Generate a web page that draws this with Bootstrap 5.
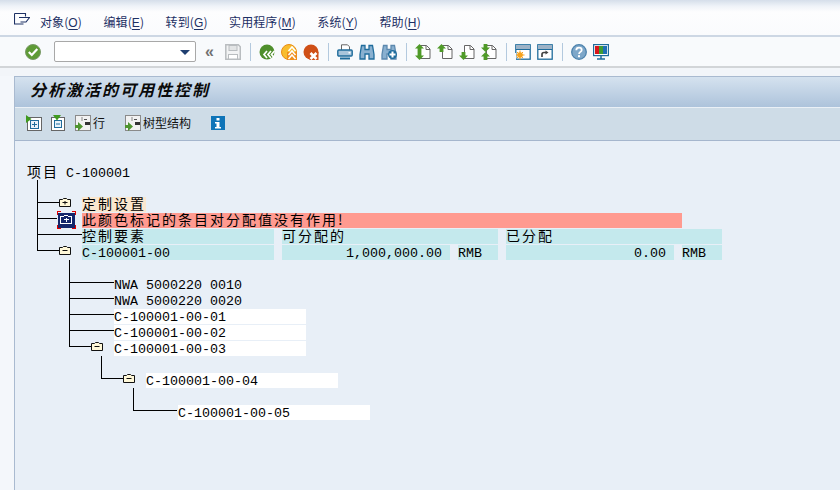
<!doctype html>
<html lang="zh">
<head>
<meta charset="utf-8">
<title>分析激活的可用性控制</title>
<link href="https://cdn.jsdelivr.net/npm/bootstrap@5.3.0/dist/css/bootstrap.min.css" rel="stylesheet">
<style>
html,body{height:100%;}
body{width:840px;height:490px;overflow:hidden;background:#f4f7fb;font-family:"Noto Sans CJK SC","Liberation Sans",sans-serif;color:#000;}
.menu-bar{height:37px;background:linear-gradient(#d5deea 0,#eef2f8 6px,#fdfdfe 12px,#fafbfd 100%);border-bottom:2px solid #cdd7e4;padding-left:14px;padding-top:12px;}
.menu-ico{width:16px;height:12px;margin-right:10px;margin-top:1px;flex:none;}
.menu-link{font-size:12px;line-height:20px;color:#1d3064;text-decoration:none;margin-right:21.5px;letter-spacing:.1px;}
.menu-link u{font-family:"Liberation Sans",sans-serif;text-underline-offset:2px;}
.sys-bar{height:31px;background:#f8fafc;border-bottom:2px solid #d2d5d8;padding-left:25px;}
.sys-ico{width:16px;height:16px;margin-right:6px;flex:none;display:block;}
.sys-sep{width:1px;height:18px;background:#b3c9de;margin-left:3px;margin-right:8px;flex:none;}
.cmd-box{width:142px;height:21px;margin-left:7px;background:#fff;border:1px solid #a8a8a8;border-radius:2px;position:relative;flex:none;}
.cmd-box::after{content:"";position:absolute;right:5px;top:8px;border-left:5px solid transparent;border-right:5px solid transparent;border-top:5px solid #1f3f70;}
.dbl-arrow{width:10px;margin:0 10px 0 9px;flex:none;font:bold 16px/18px "Liberation Sans",sans-serif;color:#707070;}
.gap-strip{height:8px;background:#f2f5f9;}
.work-area{height:414px;margin-left:14px;background:#e8eff7;border-left:1px solid #a9bad0;border-top:1px solid #a9bad0;position:relative;}
.ttl-bar{height:30px;background:linear-gradient(#d5e2ef,#adc3db);padding-left:15px;}
.ttl-txt{font-size:16px;line-height:25px;font-weight:700;font-style:italic;letter-spacing:2px;color:#0a0a0a;}
.app-bar{height:34px;background:#cedce7;border-top:1px solid #eaf0f6;border-bottom:1px solid #a5b6cd;padding-left:11px;padding-bottom:3px;}
.app-ico{width:16px;height:16px;flex:none;display:block;}
.app-txt{font-size:12px;line-height:16px;color:#111;}
.s1{margin-left:8px}.s2{margin-left:9px}.s3{margin-left:20px}.s4{margin-left:2px}.s5{margin-left:19px}
.lst{padding-top:24px;position:relative;font-family:"Liberation Mono","Noto Sans CJK SC",monospace;font-size:13.33px;color:#000;}
.rw{height:16px;display:flex;position:relative;z-index:1;}
.cl{height:15px;line-height:17px;white-space:pre;flex:none;}
.cj{font-family:"Noto Sans CJK SC",sans-serif;font-size:14px;letter-spacing:2px;line-height:13px;}
.hd{line-height:13px;}
.hd .cj{margin-right:-1px;}
.at12{margin-left:12px}.at67{margin-left:67px}.at99{margin-left:99px}.at131{margin-left:131px}.at163{margin-left:163px}.at8{margin-left:8px}
.w64{width:64px}.w192{width:192px}.w216{width:216px}.w168{width:168px}.w40{width:40px}.w600{width:600px}
.bg-set{background:#fae7cf}.bg-red{background:#ff9a90}.bg-cy{background:#c4e9ed}.bg-wh{background:#fff}
.num{text-align:right;padding-right:8px}
.tree-art{position:absolute;left:0;top:0;pointer-events:none;}
</style>
</head>
<body>
<svg width="0" height="0" class="position-absolute">
<defs>
<symbol id="pg" viewBox="0 0 16 16"><path d="M5.500 1.500h6l3.500 3.500v9.500H5.500z" fill="#fff" stroke="#666"/><path d="M11 1.500V5.500h4" fill="none" stroke="#666"/></symbol>
<symbol id="up" viewBox="0 0 8 7"><path d="M4 0l4 4H5.700v3H2.300V4H0z" fill="#4f9a28"/></symbol>
<symbol id="dn" viewBox="0 0 8 7"><path d="M4 7L0 3h2.300V0h3.400v3H8z" fill="#4f9a28"/></symbol>
<symbol id="fp" viewBox="0 0 12 9"><path d="M.5 1.500h3l1-1h3l1 1h3v7H.5z" fill="#fff8d8" stroke="#111"/><path d="M3.500 4.500h5M6 3v3.500" stroke="#111"/></symbol>
<symbol id="fm" viewBox="0 0 12 9"><path d="M.5 1.500h3l1-1h3l1 1h3v7H.5z" fill="#fff8d8" stroke="#111"/><path d="M3.500 4.500h5" stroke="#111"/></symbol>
<symbol id="tr" viewBox="0 0 16 16"><rect x=".5" y=".5" width="15" height="15" fill="#f2f2f2" stroke="#8a8a8a"/><path d="M9 4.500h3M11 8.500h4" stroke="#555"/><path d="M7 2v4" stroke="#888"/><rect x="10" y="7" width="5" height="3" fill="#333"/><path d="M0 10h3V7l5 4.500-5 4.500v-3H0z" fill="#4f9530"/></symbol>
</defs>
</svg>

<nav class="menu-bar d-flex align-items-start">
  <svg class="menu-ico" viewBox="0 0 16 12"><path d="M.5.500h11v3M.5.500v10.500h9M5 4.500h10.500l-3.500 4.500H6.500" fill="none" stroke="#1d3064" stroke-width="1.100"/></svg>
  <a class="menu-link" href="#">对象(<u>O</u>)</a>
  <a class="menu-link" href="#">编辑(<u>E</u>)</a>
  <a class="menu-link" href="#">转到(<u>G</u>)</a>
  <a class="menu-link" href="#">实用程序(<u>M</u>)</a>
  <a class="menu-link" href="#">系统(<u>Y</u>)</a>
  <a class="menu-link" href="#">帮助(<u>H</u>)</a>
</nav>

<div class="sys-bar d-flex align-items-center">
  <svg class="sys-ico" viewBox="0 0 16 16"><circle cx="8" cy="8" r="7.500" fill="#5e9b35" stroke="#7a9a68"/><path d="M3.800 8l3 3 5.500-6" fill="none" stroke="#fff" stroke-width="2.200"/></svg>
  <div class="cmd-box"></div>
  <span class="dbl-arrow">«</span>
  <svg class="sys-ico" viewBox="0 0 16 16"><path d="M.8.800h12.500l2 2v12.400H.8z" fill="#f2f3f4" stroke="#b9bdc0" stroke-width="1.500"/><rect x="4" y="1.500" width="8" height="5" fill="#e3e5e6" stroke="#b9bdc0"/><rect x="3.500" y="10.500" width="9" height="4.500" fill="#fff" stroke="#b9bdc0"/></svg>
  <span class="sys-sep"></span>
  <svg class="sys-ico" viewBox="0 0 16 16"><circle cx="8" cy="8" r="7.500" fill="#4f8f2c"/><path d="M8 7l-3 3.500 3 3.500M12 7l-3 3.500 3 3.500M15.500 7l-3 3.500 3 3.500" fill="none" stroke="#fff" stroke-width="1.700"/></svg>
  <svg class="sys-ico" viewBox="0 0 16 16"><circle cx="8" cy="8" r="7.500" fill="#f8bd2e" stroke="#e98c14"/><path d="M6 8h10v8H6z" fill="#ef8e1d"/><path d="M7.500 7l3.500-4 3.500 4M7.500 11l3.500-4 3.500 4M7.500 15l3.500-4 3.500 4" fill="none" stroke="#fff" stroke-width="1.500"/></svg>
  <svg class="sys-ico" viewBox="0 0 16 16"><circle cx="8" cy="8" r="7.500" fill="#cf4f16"/><rect x="6.500" y="8" width="9" height="8" fill="#cf4f16"/><path d="M7.500 9l6 6M13.500 9l-6 6" stroke="#fff" stroke-width="2.600"/></svg>
  <span class="sys-sep"></span>
  <svg class="sys-ico" viewBox="0 0 16 16"><path d="M4.500 6V.8h6l2 2V6" fill="#fff" stroke="#666"/><rect x=".8" y="6" width="14.400" height="6" rx="1" fill="#a9c5db" stroke="#1f6c9c" stroke-width="1.400"/><path d="M3 14.500h10" stroke="#1f6c9c" stroke-width="2"/><rect x="11.500" y="8" width="2" height="1.500" fill="#fff"/></svg>
  <svg class="sys-ico" viewBox="0 0 16 16"><path d="M2.500 1.500h3.500v4h4v-4h3.500l1.500 9v4.500h-5v-5h-4v5h-5v-4.500z" fill="#89b0d0" stroke="#1f6c9c" stroke-width="1.300"/></svg>
  <svg class="sys-ico" viewBox="0 0 16 16"><path d="M2.500 1.500h3.500v4h4v-4h3.500l1.500 9v4.500h-5v-5h-4v5h-5v-4.500z" fill="#89b0d0" stroke="#5b88ae" stroke-width="1.300"/><circle cx="11.500" cy="10.500" r="4.500" fill="#1f6c9c"/><path d="M11.500 7.500v6M8.500 10.500h6" stroke="#fff" stroke-width="2"/></svg>
  <span class="sys-sep"></span>
  <svg class="sys-ico" viewBox="0 0 16 16"><use href="#pg"/><use href="#up" x="0" y="0" width="9" height="8"/><use href="#dn" x="0" y="8" width="9" height="8"/></svg>
  <svg class="sys-ico" viewBox="0 0 16 16"><use href="#pg"/><use href="#up" x="0" y="0" width="9" height="8"/></svg>
  <svg class="sys-ico" viewBox="0 0 16 16"><use href="#pg"/><use href="#dn" x="0" y="8" width="9" height="8"/></svg>
  <svg class="sys-ico" viewBox="0 0 16 16"><use href="#pg"/><use href="#dn" x="0" y="0" width="9" height="8"/><use href="#up" x="0" y="8" width="9" height="8"/></svg>
  <span class="sys-sep"></span>
  <svg class="sys-ico" viewBox="0 0 16 16"><rect x=".8" y=".8" width="14.400" height="14.400" fill="#fff" stroke="#1f6c9c" stroke-width="1.300"/><rect x="1" y="1" width="14" height="4" fill="#9db2c6"/><path d="M1 5.500h14" stroke="#1f6c9c"/><path d="M5 6.500v9M.5 11h9M2 8l6 6M8 8l-6 6" stroke="#f7a21c"/><circle cx="5" cy="11" r="2.800" fill="#f7a21c"/><rect x="0" y="9" width="1" height="7" fill="#f8fafc"/></svg>
  <svg class="sys-ico" viewBox="0 0 16 16"><rect x=".8" y=".8" width="14.400" height="14.400" fill="#fff" stroke="#1f6c9c" stroke-width="1.300"/><rect x="1" y="1" width="14" height="4" fill="#9db2c6"/><path d="M1 5.500h14" stroke="#1f6c9c"/><path d="M5 13V10.500q0-2 2-2h2" fill="none" stroke="#444" stroke-width="1.700"/><path d="M8.500 6.500l3 2-3 2z" fill="#444"/></svg>
  <span class="sys-sep"></span>
  <svg class="sys-ico" viewBox="0 0 16 16"><circle cx="8" cy="8" r="7.300" fill="#7ea7c9" stroke="#4c82ad" stroke-width="1.300"/><path d="M5.300 6.200q0-2.500 2.700-2.500t2.700 2.300q0 1.200-1.400 2-1.200.7-1.200 2" fill="none" stroke="#fff" stroke-width="1.800"/><rect x="7" y="11.200" width="2" height="2" fill="#fff"/></svg>
  <svg class="sys-ico" viewBox="0 0 16 16"><rect x=".6" y=".6" width="14.800" height="11" fill="#fff" stroke="#1f6c9c" stroke-width="1.200"/><rect x="2" y="2" width="4" height="8" fill="#d8161b"/><rect x="6" y="2" width="4" height="8" fill="#3f9c35"/><rect x="10" y="2" width="4" height="8" fill="#1f6fb5"/><path d="M8 12v2.500M4 15h8" stroke="#1f6c9c" stroke-width="1.500"/></svg>
</div>

<div class="gap-strip"></div>

<main class="work-area">
  <div class="ttl-bar"><div class="ttl-txt">分析激活的可用性控制</div></div>
  <div class="app-bar d-flex align-items-center">
    <svg class="app-ico" viewBox="0 0 16 16"><rect x="1.500" y="2.500" width="14" height="13" fill="#fff" stroke="#666"/><rect x="4.500" y="5.500" width="8" height="8" fill="#e8f2fa" stroke="#1f6c9c"/><path d="M8.500 7v5M6 9.500h5" stroke="#1f6c9c"/><path d="M0 0l5.500 4L0 8z" fill="#3f9a1e"/></svg>
    <svg class="app-ico s1" viewBox="0 0 16 16"><rect x="1.500" y="2.500" width="13" height="13" fill="#fff" stroke="#666"/><rect x="4.500" y="5.500" width="7" height="7" fill="#e8f2fa" stroke="#1f6c9c"/><path d="M6 9h4" stroke="#1f6c9c"/><path d="M3 0h8L7 5.500z" fill="#3f9a1e"/></svg>
    <svg class="app-ico s2"><use href="#tr" width="16" height="16"/></svg>
    <span class="app-txt s4">行</span>
    <svg class="app-ico s3"><use href="#tr" width="16" height="16"/></svg>
    <span class="app-txt s4">树型结构</span>
    <svg class="app-ico s5" viewBox="0 0 16 16"><rect x="1" y="1" width="14" height="14" fill="#0e74b8"/><rect x="6.500" y="3" width="3" height="2.500" fill="#fff"/><path d="M5 7h4.500v5H11v1.500H5V12h1.500V8.500H5z" fill="#fff"/></svg>
  </div>

  <section class="lst">
    <div class="rw"><span class="cl hd at12"><span class="cj">项目</span> C-100001</span></div>
    <div class="rw"></div>
    <div class="rw"><span class="cl cj at67 w64 bg-set">定制设置</span></div>
    <div class="rw"><span class="cl cj at67 w600 bg-red">此颜色标记的条目对分配值没有作用!</span></div>
    <div class="rw"><span class="cl cj at67 w192 bg-cy">控制要素</span><span class="cl cj at8 w216 bg-cy">可分配的</span><span class="cl cj at8 w216 bg-cy">已分配</span></div>
    <div class="rw"><span class="cl at67 w192 bg-cy">C-100001-00</span><span class="cl at8 w168 bg-cy num">1,000,000.00</span><span class="cl at8 w40 bg-cy">RMB</span><span class="cl at8 w168 bg-cy num">0.00</span><span class="cl at8 w40 bg-cy">RMB</span></div>
    <div class="rw"></div>
    <div class="rw"><span class="cl at99 w192">NWA 5000220 0010</span></div>
    <div class="rw"><span class="cl at99 w192">NWA 5000220 0020</span></div>
    <div class="rw"><span class="cl at99 w192 bg-wh">C-100001-00-01</span></div>
    <div class="rw"><span class="cl at99 w192 bg-wh">C-100001-00-02</span></div>
    <div class="rw"><span class="cl at99 w192 bg-wh">C-100001-00-03</span></div>
    <div class="rw"></div>
    <div class="rw"><span class="cl at131 w192 bg-wh">C-100001-00-04</span></div>
    <div class="rw"></div>
    <div class="rw"><span class="cl at163 w192 bg-wh">C-100001-00-05</span></div>
    <svg class="tree-art" width="170" height="300" viewBox="15 141 170 300" aria-hidden="true">
      <g stroke="#000" fill="none" shape-rendering="crispEdges">
        <path d="M37.500 180V250.500H59M37.500 202.500H59M37.500 218.500H57M37.500 234.500H82"/>
        <path d="M69.500 260V346.500H91M69.500 282.500H114M69.500 298.500H114M69.500 314.500H114M69.500 330.500H114"/>
        <path d="M101.500 356V378.500H123"/>
        <path d="M133.500 388V410.500H177"/>
      </g>
      <use href="#fp" x="59" y="198" width="12" height="9"/>
      <rect x="58" y="213" width="17" height="15" fill="#14266b"/>
      <path d="M57.500 215v-3.500h3.500M71.500 211.500h4v3.500M75.500 225v3.500h-4M61 228.500h-3.500V225" fill="none" stroke="#e00000" shape-rendering="crispEdges"/>
      <g fill="none" stroke="#fff" shape-rendering="crispEdges"><path d="M60.500 216.500h3l1-1h3l1 1h3v7h-11z"/><path d="M63.500 219.500h5M66 218v3.500"/></g>
      <use href="#fm" x="59" y="246" width="12" height="9"/>
      <use href="#fm" x="91" y="342" width="12" height="9"/>
      <use href="#fm" x="123" y="374" width="12" height="9"/>
    </svg>
  </section>
</main>
<script src="https://cdn.jsdelivr.net/npm/bootstrap@5.3.0/dist/js/bootstrap.bundle.min.js"></script>
</body>
</html>
